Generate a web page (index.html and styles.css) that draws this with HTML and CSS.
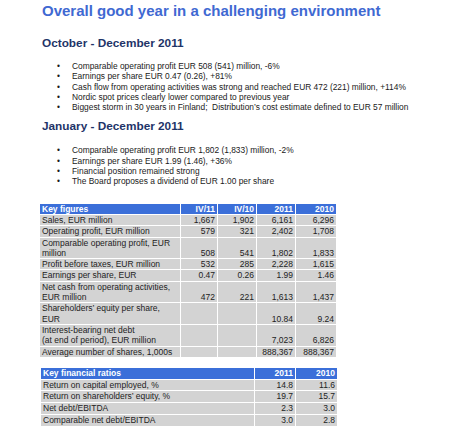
FILE: index.html
```html
<!doctype html>
<html lang="en">
  <head>
    <meta charset="UTF-8" />
    <title>Overall good year in a challenging environment</title>
    <link rel="stylesheet" href="styles.css">
  </head>
  <body>
    <h1>Overall good year in a challenging environment</h1>

    <h2>October - December 2011</h2>
    <ul class="highlights">
      <li>Comparable operating profit EUR 508 (541) million, -6%</li>
      <li>Earnings per share EUR 0.47 (0.26), +81%</li>
      <li>Cash flow from operating activities was strong and reached EUR 472 (221) million, +114%</li>
      <li>Nordic spot prices clearly lower compared to previous year</li>
      <li>Biggest storm in 30 years in Finland;&nbsp; Distribution’s cost estimate defined to EUR 57 million</li>
    </ul>

    <h2 class="second">January - December 2011</h2>
    <ul class="highlights">
      <li>Comparable operating profit EUR 1,802 (1,833) million, -2%</li>
      <li>Earnings per share EUR 1.99 (1.46), +36%</li>
      <li>Financial position remained strong</li>
      <li>The Board proposes a dividend of EUR 1.00 per share</li>
    </ul>

    <table class="figures key">
      <colgroup>
        <col class="c-label">
        <col class="c-q1">
        <col class="c-q2">
        <col class="c-y1">
        <col class="c-y2">
      </colgroup>
      <thead>
        <tr>
          <th>Key figures</th>
          <th>IV/11</th>
          <th>IV/10</th>
          <th>2011</th>
          <th>2010</th>
        </tr>
      </thead>
      <tbody>
        <tr><td>Sales, EUR million</td><td>1,667</td><td>1,902</td><td>6,161</td><td>6,296</td></tr>
        <tr><td>Operating profit, EUR million</td><td>579</td><td>321</td><td>2,402</td><td>1,708</td></tr>
        <tr><td>Comparable operating profit, EUR million</td><td>508</td><td>541</td><td>1,802</td><td>1,833</td></tr>
        <tr><td>Profit before taxes, EUR million</td><td>532</td><td>285</td><td>2,228</td><td>1,615</td></tr>
        <tr><td>Earnings per share, EUR</td><td>0.47</td><td>0.26</td><td>1.99</td><td>1.46</td></tr>
        <tr><td>Net cash from operating activities, EUR million</td><td>472</td><td>221</td><td>1,613</td><td>1,437</td></tr>
        <tr><td>Shareholders’ equity per share, EUR</td><td></td><td></td><td>10.84</td><td>9.24</td></tr>
        <tr><td>Interest-bearing net debt<br>(at end of period), EUR million</td><td></td><td></td><td>7,023</td><td>6,826</td></tr>
        <tr><td>Average number of shares, 1,000s</td><td></td><td></td><td>888,367</td><td>888,367</td></tr>
      </tbody>
    </table>

    <table class="figures ratios">
      <colgroup>
        <col class="r-label">
        <col class="r-y1">
        <col class="r-y2">
      </colgroup>
      <thead>
        <tr>
          <th>Key financial ratios</th>
          <th>2011</th>
          <th>2010</th>
        </tr>
      </thead>
      <tbody>
        <tr><td>Return on capital employed, %</td><td>14.8</td><td>11.6</td></tr>
        <tr><td>Return on shareholders’ equity, %</td><td>19.7</td><td>15.7</td></tr>
        <tr><td>Net debt/EBITDA</td><td>2.3</td><td>3.0</td></tr>
        <tr><td>Comparable net debt/EBITDA</td><td>3.0</td><td>2.8</td></tr>
      </tbody>
    </table>
  </body>
</html>
```

FILE: styles.css
```css
body {
  font-family: "Liberation Sans", Arial, sans-serif;
  margin: 0;
  padding: 1px 0 0 42px;
  background: #fff;
  color: #1a1a1a;
}
h1 {
  font-size: 15px;
  line-height: 20px;
  margin: 0;
  color: #3f69d2;
}
h2 {
  font-size: 11.8px;
  line-height: 15px;
  margin: 15px 0 0;
  color: #1e3468;
}
h2.second {
  margin-top: 7px;
}
.highlights {
  list-style: none;
  margin: 10px 0 0;
  padding: 0 0 0 15px;
  font-size: 8.4px;
  line-height: 10.3px;
}
.highlights li {
  display: flex;
}
.highlights li::before {
  content: "•";
  flex: 0 0 15px;
}
.highlights + .second + .highlights {
  margin-top: 11px;
}
.figures {
  border-collapse: separate;
  border-spacing: 1px;
  table-layout: fixed;
  font-size: 8.5px;
  line-height: 10.3px;
  margin-left: -3px;
}
.figures.key {
  margin-top: 16px;
}
.figures.ratios {
  margin-top: 9px;
  margin-left: -2px;
  line-height: 10.8px;
}
.figures th,
.figures td {
  padding: 0 2px;
  text-align: right;
  vertical-align: bottom;
}
.figures th {
  background: #3b6fd9;
  color: #fff;
  font-weight: bold;
}
.figures td {
  background: #d3d3d3;
  color: #222;
}
.figures th:first-child,
.figures td:first-child {
  text-align: left;
}
.c-label { width: 140px; }
.c-q1 { width: 36px; }
.c-q2 { width: 38px; }
.c-y1 { width: 38px; }
.c-y2 { width: 40px; }
.r-label { width: 213px; }
.r-y1 { width: 40px; }
.r-y2 { width: 41px; }
```
